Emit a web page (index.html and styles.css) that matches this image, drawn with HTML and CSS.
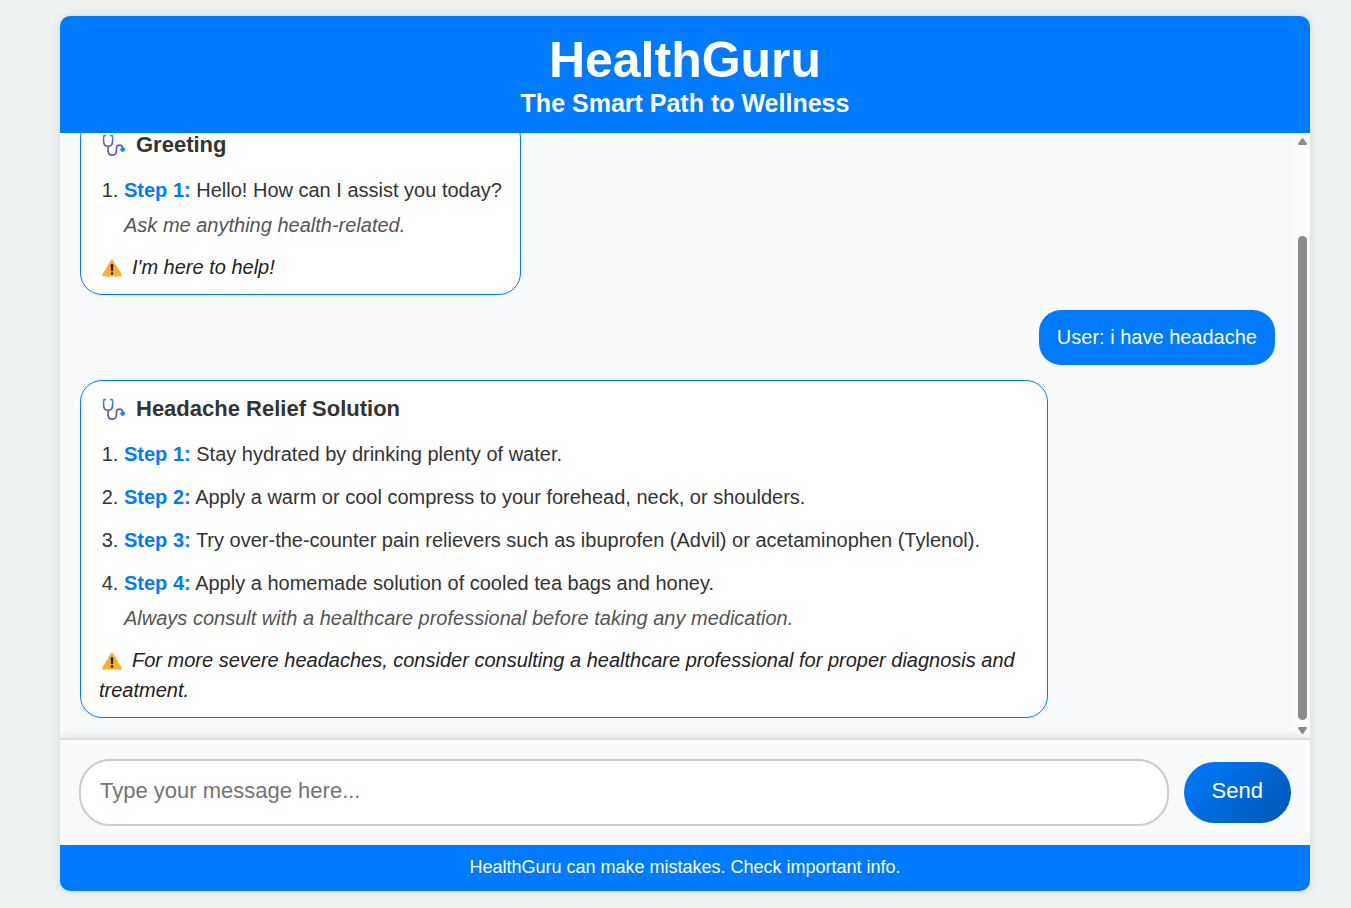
FILE: index.html
```html
<!DOCTYPE html>
<html lang="en">
<head>
<meta charset="utf-8">
<title>HealthGuru</title>
<meta name="viewport" content="width=device-width, initial-scale=1">
<link rel="stylesheet" href="styles.css">
</head>
<body>
<svg width="0" height="0" class="sprite" aria-hidden="true">
  <defs>
    <linearGradient id="tube" gradientUnits="userSpaceOnUse" x1="0" y1="2" x2="0" y2="12">
      <stop offset="0" stop-color="#12a5e8"/>
      <stop offset="0.4" stop-color="#3f8acb"/>
      <stop offset="0.7" stop-color="#6a5a9c"/>
    </linearGradient>
    <symbol id="stethoscope" viewBox="0 0 24 24">
      <path d="M3.6 2.6H2.5Q1.6 2.6 1.6 3.6V8.2Q1.6 13.2 6.1 13.2T10.6 8.2V3.6Q10.6 2.6 9.7 2.6H8.6" fill="none" stroke="url(#tube)" stroke-width="1.6" stroke-linecap="round"/>
      <path d="M6.1 13.4V17.4Q6.1 22.1 10.3 22.1T14.4 17.8V16Q14.4 12.2 17.6 12.2T20.6 15.5" fill="none" stroke="#6b5b9e" stroke-width="1.7"/>
      <circle cx="20.7" cy="16.6" r="2.4" fill="#0a8ef2"/>
    </symbol>
    <symbol id="warning" viewBox="0 0 20 18">
      <path d="M9 .9Q10 -.4 11 .9L19.7 15.8Q20.2 17.4 18.8 17.5H1.2Q-.2 17.4.3 15.8Z" fill="#ffb02e"/>
      <path d="M8.9 5.4H11.1L10.7 12H9.3Z" fill="#151515" stroke="#151515" stroke-width=".5" stroke-linejoin="round"/>
      <circle cx="10" cy="14.5" r="1.2" fill="#151515"/>
    </symbol>
  </defs>
</svg>
<div class="app">
  <header class="header">
    <h1 class="brand">HealthGuru</h1>
    <p class="tagline">The Smart Path to Wellness</p>
  </header>
  <main class="chat">
    <div class="messages">
      <article class="message bot">
        <h2 class="topic"><svg class="icon-topic" aria-hidden="true"><use href="#stethoscope"/></svg>Greeting</h2>
        <ol class="steps">
          <li><strong>Step 1:</strong> Hello! How can I assist you today?
            <em class="note">Ask me anything health-related.</em></li>
        </ol>
        <p class="warning"><svg class="icon-warning" aria-hidden="true"><use href="#warning"/></svg>I'm here to help!</p>
      </article>
      <article class="message user">User: i have headache</article>
      <article class="message bot">
        <h2 class="topic"><svg class="icon-topic" aria-hidden="true"><use href="#stethoscope"/></svg>Headache Relief Solution</h2>
        <ol class="steps">
          <li><strong>Step 1:</strong> Stay hydrated by drinking plenty of water.</li>
          <li><strong>Step 2:</strong> Apply a warm or cool compress to your forehead, neck, or shoulders.</li>
          <li><strong>Step 3:</strong> Try over-the-counter pain relievers such as ibuprofen (Advil) or acetaminophen (Tylenol).</li>
          <li><strong>Step 4:</strong> Apply a homemade solution of cooled tea bags and honey.
            <em class="note">Always consult with a healthcare professional before taking any medication.</em></li>
        </ol>
        <p class="warning"><svg class="icon-warning" aria-hidden="true"><use href="#warning"/></svg>For more severe headaches, consider consulting a healthcare professional for proper diagnosis and treatment.</p>
      </article>
    </div>
    <div class="scrollbar" aria-hidden="true">
      <svg class="arrow" viewBox="0 0 9 7"><path d="M4.5 0Q5 0 5.3.5L8.8 5.5Q9.3 7 8 7H1Q-.3 7 .2 5.5L3.7.5Q4 0 4.5 0Z"/></svg>
      <div class="track"><div class="thumb"></div></div>
      <svg class="arrow" viewBox="0 0 9 7"><path d="M4.5 7Q5 7 5.3 6.5L8.8 1.5Q9.3 0 8 0H1Q-.3 0 .2 1.5L3.7 6.5Q4 7 4.5 7Z"/></svg>
    </div>
  </main>
  <form class="composer">
    <input class="field" type="text" aria-label="Message" placeholder="Type your message here...">
    <button class="send" type="button">Send</button>
  </form>
  <footer class="footer">HealthGuru can make mistakes. Check important info.</footer>
</div>
</body>
</html>
```

FILE: styles.css
```css
* {
  box-sizing: border-box;
}

body {
  margin: 0;
  height: 100vh;
  padding: 16px 41px 17px 60px;
  background: #edf1f2;
  color: #333;
  font: 20px/30px "Liberation Sans", Arial, sans-serif;
}

h1, h2, p, ol {
  margin: 0;
}

.sprite {
  position: absolute;
}

.app {
  display: flex;
  flex-direction: column;
  height: 100%;
  overflow: hidden;
  border-radius: 10px;
  background: #f9fafc;
  box-shadow: 0 0 10px rgba(0, 0, 0, 0.1);
}

.header {
  flex: none;
  padding: 15px 20px;
  background: #007bff;
  color: #fff;
  text-align: center;
}

.brand {
  font-size: 50px;
  line-height: 58px;
}

.tagline {
  font-size: 25px;
  font-weight: bold;
  line-height: 29px;
}

.chat {
  flex: 1;
  min-height: 0;
  display: flex;
}

.messages {
  flex: 1;
  min-width: 0;
  display: flex;
  flex-direction: column;
  justify-content: flex-end;
  gap: 15px;
  padding: 20px;
  overflow: hidden;
}

.message {
  flex: none;
  max-width: 81%;
  padding: 12px 18px;
  border-radius: 22px;
}

.bot {
  align-self: flex-start;
  border: 1px solid #007bff;
  background: #fff;
}

.user {
  align-self: flex-end;
  padding: 12px 18px 13px;
  background: #007bff;
  color: #fff;
}

.topic {
  display: flex;
  align-items: center;
  gap: 10px;
  padding-left: 3px;
  margin-bottom: 14px;
  font-size: 22px;
  line-height: 32px;
}

.icon-topic {
  width: 24px;
  height: 24px;
}

.steps {
  display: grid;
  gap: 13px;
  padding-left: 25px;
}

.steps strong {
  color: #007bff;
}

.note {
  display: block;
  margin-top: 5px;
  color: #555;
}

.warning {
  margin-top: 12px;
  font-style: italic;
  color: #222;
}

.icon-warning {
  width: 20px;
  height: 18px;
  margin: 0 10px 0 3px;
  vertical-align: -3px;
}

.scrollbar {
  flex: none;
  width: 15px;
  display: flex;
  flex-direction: column;
  align-items: center;
  gap: 5px;
  padding: 5px 0 4px;
  background: #fcfcfc;
}

.arrow {
  flex: none;
  width: 9px;
  height: 7px;
  fill: #8b8b8b;
}

.track {
  flex: 1;
  display: flex;
  align-items: flex-end;
  padding-bottom: 2px;
}

.thumb {
  width: 9px;
  height: 85%;
  border-radius: 5px;
  background: #8b8b8b;
}

.composer {
  flex: none;
  display: flex;
  align-items: center;
  gap: 15px;
  padding: 19px;
  border-top: 2px solid #ddd;
  background: #f9fafc;
  box-shadow: 0 -2px 10px rgba(0, 0, 0, 0.1);
}

.field {
  flex: 1;
  min-width: 0;
  height: 67px;
  padding: 0 19px 3px;
  border: 2px solid #ccc;
  border-radius: 31px;
  background: #fff;
  color: #333;
  font: inherit;
  font-size: 22px;
}

.field::placeholder {
  color: #757575;
}

.send {
  height: 61px;
  padding: 0 28px 3px;
  border: 0;
  border-radius: 31px;
  background: linear-gradient(135deg, #007bff, #0056b3);
  color: #fff;
  font: inherit;
  font-size: 22px;
}

.footer {
  flex: none;
  padding: 7px 20px 9px;
  background: #007bff;
  color: #fff;
  font-size: 18px;
  text-align: center;
}
```
